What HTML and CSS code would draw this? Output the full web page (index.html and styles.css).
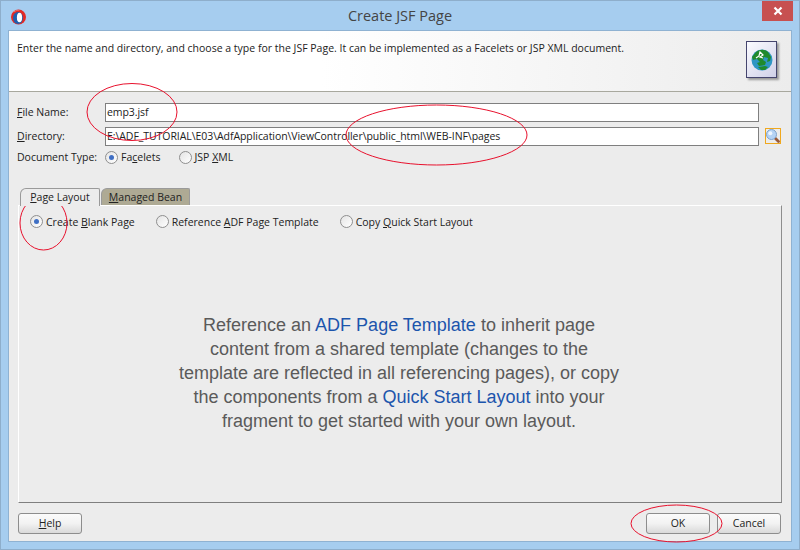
FILE: index.html
```html
<!DOCTYPE html>
<html lang="en">
<head>
<meta charset="utf-8">
<title>Create JSF Page</title>
<link rel="stylesheet" href="styles.css">
</head>
<body>
<div class="window">
  <div class="titlebar">
    <svg class="app-icon" width="16" height="16" viewBox="0 0 16 16">
      <circle cx="8.500" cy="8" r="7.500" fill="#e32a25"/>
      <path d="M2 4C4 1 8 .8 10 1.500 6 1.500 3 3 2 4Z" fill="#f6a09a"/>
      <ellipse cx="8" cy="9" rx="5" ry="6" fill="#1f5fae"/>
      <ellipse cx="9.500" cy="8.500" rx="2.600" ry="4.800" fill="#fff"/>
    </svg>
    <div class="title">Create JSF Page</div>
    <div class="close">
      <svg width="10" height="10" viewBox="0 0 10 10"><path d="M1.500 1.500l7 7M8.500 1.500l-7 7" stroke="#fff" stroke-width="2.200"/></svg>
    </div>
  </div>
  <div class="dialog">
    <div class="header">
      <p class="intro">Enter the name and directory, and choose a type for the JSF Page. It can be implemented as a Facelets or JSP XML document.</p>
      <div class="globe-tile">
        <svg width="22" height="22" viewBox="0 0 22 22">
          <circle cx="11" cy="11" r="10.500" fill="#2f96c4"/>
          <path d="M5 3c4-3 9-3 12 0l3 5-1 4-3 1 1-4-4-1-1 3 3 2-1 3-6 1-2-3 3-1-3-3-4 1-1-3Z" fill="#1f8a2d"/>
          <path d="M7 18l7-1 3 1-3 3h-4Z" fill="#1f8a2d"/>
          <path d="M5 9l3-2 1-4 3 3-3 2 3 1" stroke="#fff" stroke-width="1.200" fill="none"/>
        </svg>
      </div>
    </div>
    <div class="form">
      <div class="row">
        <label class="field-label"><u>F</u>ile Name:</label>
        <div class="input">emp3.jsf</div>
        <div class="input-gap"></div>
      </div>
      <div class="row">
        <label class="field-label"><u>D</u>irectory:</label>
        <div class="input">E:\ADF_TUTORIAL\E03\AdfApplication\ViewController\public_html\WEB-INF\pages</div>
        <div class="input-gap">
          <div class="search-btn">
            <svg width="14" height="14" viewBox="0 0 14 14">
              <path d="M8.500 8.500l4 4" stroke="#9a5a3a" stroke-width="2.800" stroke-linecap="round"/>
              <circle cx="5.500" cy="5.500" r="5" fill="#b5d3f5" stroke="#7fa3cc"/>
              <circle cx="4.300" cy="4.300" r="2" fill="#eef6ff"/>
            </svg>
          </div>
        </div>
      </div>
      <div class="row type-row">
        <span class="field-label">Document Type:</span>
        <span class="radio selected"></span><span class="radio-text">Fa<u>c</u>elets</span>
        <span class="radio second"></span><span class="radio-text">JSP <u>X</u>ML</span>
      </div>
    </div>
    <div class="tabs">
      <div class="tab active"><u>P</u>age Layout</div>
      <div class="tab inactive"><u>M</u>anaged Bean</div>
    </div>
    <div class="panel">
      <div class="layout-options">
        <span class="radio selected"></span><span class="radio-text opt">Create <u>B</u>lank Page</span>
        <span class="radio"></span><span class="radio-text opt">Reference <u>A</u>DF Page Template</span>
        <span class="radio"></span><span class="radio-text">Copy <u>Q</u>uick Start Layout</span>
      </div>
      <div class="description">
        <p>Reference an <span class="link">ADF Page Template</span> to inherit page<br>content from a shared template (changes to the<br>template are reflected in all referencing pages), or copy<br>the components from a <span class="link">Quick Start Layout</span> into your<br>fragment to get started with your own layout.</p>
      </div>
    </div>
    <div class="footer">
      <div class="btn"><u>H</u>elp</div>
      <div class="footer-right">
        <div class="btn">OK</div>
        <div class="btn">Cancel</div>
      </div>
    </div>
  </div>
  <svg class="annotations" width="800" height="550" viewBox="0 0 800 550">
    <ellipse cx="132" cy="112" rx="45" ry="28.500"/>
    <ellipse cx="436.500" cy="135" rx="90.500" ry="30"/>
    <ellipse cx="43.500" cy="223" rx="23.500" ry="27"/>
    <ellipse cx="676.500" cy="523.500" rx="45.500" ry="18.500"/>
  </svg>
</div>
</body>
</html>
```
FILE: styles.css
```css
* { box-sizing: border-box; }
html, body { margin: 0; padding: 0; }
body { font-family: "Open Sans", "Liberation Sans", sans-serif; font-size: 10.5px; color: #222; }
p { margin: 0; }
.window {
  position: relative;
  width: 800px; height: 550px;
  background: #a6cdef;
  border: 1px solid #8eaecb;
  display: flex; flex-direction: column;
  overflow: hidden;
}
.titlebar { height: 29px; flex: none; display: flex; align-items: center; position: relative; }
.app-icon { margin-left: 9px; margin-top: 3px; }
.title { position: absolute; left: 0; right: 0; top: 5px; text-align: center; font-size: 14.500px; line-height: 20px; color: #444; }
.close {
  position: absolute; right: 6px; top: 0;
  width: 31px; height: 20px;
  background: #c75050;
  display: flex; align-items: center; justify-content: center;
}
.dialog {
  flex: 1;
  margin: 0 7px 7px;
  background: #ececec;
  border: 1px solid #8fb2d2;
  display: flex; flex-direction: column;
}
.header {
  height: 61px; flex: none;
  background: linear-gradient(90deg, #fff, #fff 40%, #ececec);
  border-bottom: 1px solid #a8a89e;
  display: flex; justify-content: space-between;
  padding: 9px 14px 0 8px;
}
.intro { line-height: 16px; }
.globe-tile {
  width: 31px; height: 37px; margin-top: 1px;
  background: linear-gradient(135deg, #fbfbff, #cfd0e8);
  border: 1px solid #45456e;
  box-shadow: 2px 2px 2px #999;
  display: flex; align-items: center; justify-content: center;
}
.form { padding: 10px 0 0 8px; display: flex; flex-direction: column; gap: 4px; }
.row { display: flex; align-items: center; height: 20px; }
.field-label { width: 88px; flex: none; }
.input {
  width: 654px; height: 19px; flex: none;
  background: #fff;
  border: 1px solid #7f7f7f;
  padding-left: 1px;
  line-height: 17px;
  letter-spacing: -0.06px;
  white-space: nowrap; overflow: hidden;
}
.input-gap { flex: 1; padding-left: 6px; }
.search-btn {
  width: 16px; height: 16px;
  border: 1px solid #f0a81e;
  display: flex; align-items: center; justify-content: center;
}
.type-row { margin-top: -3px; }
.radio {
  width: 13px; height: 13px; flex: none;
  border: 1px solid #8f8f8f; border-radius: 50%;
  background: linear-gradient(135deg, #e4e4e4, #fff);
  margin-right: 3px;
  display: flex; align-items: center; justify-content: center;
}
.radio.selected::after {
  content: ""; width: 5px; height: 5px; border-radius: 50%;
  background: #3f6fc4;
}
.radio.second { margin-left: 18px; }
.radio-text { white-space: nowrap; }
.radio-text.opt { margin-right: 21px; }
.tabs { display: flex; margin: 21px 0 0 11px; height: 18px; flex: none; align-items: flex-end; }
.tab { height: 18px; line-height: 17px; text-align: center; }
.tab.active {
  width: 80px;
  background: #ececec;
  border: 1px solid #9a9a9a; border-bottom: 0;
  border-radius: 6px 2px 0 0;
  position: relative; z-index: 1;
}
.tab.inactive {
  width: 89px; margin-left: 1px;
  background: #aeaa94;
  border: 1px solid #9a9a9a; border-bottom: 0;
  border-radius: 6px 2px 0 0;
}
.panel {
  height: 298px; flex: none;
  margin: -1px 9px 0;
  border-top: 1px solid #fff; border-left: 1px solid #fff;
  border-right: 1px solid #8d8d8d; border-bottom: 1px solid #7f7f7f;
  display: flex; flex-direction: column;
}
.layout-options { display: flex; align-items: center; padding: 7px 0 0 11px; height: 24px; }
.description {
  flex: 1; display: flex; align-items: center; justify-content: center;
  padding: 13px 2px 0 0;
}
.description p {
  font-family: "Liberation Sans", Arial, sans-serif;
  font-size: 18px; line-height: 24px;
  color: #5a5a5a; text-align: center;
}
.link { color: #1c55ac; }
.footer { display: flex; justify-content: space-between; padding: 10px 10px 0 9px; }
.footer-right { display: flex; gap: 7px; }
.btn {
  width: 64px; height: 21px;
  border: 1px solid #8d8d8d; border-radius: 3px;
  background: linear-gradient(180deg, #fbfbfb, #f2f2f2 50%, #d9d9d9);
  text-align: center; line-height: 19px;
}
.annotations { position: absolute; left: -1px; top: -1px; pointer-events: none; }
.annotations ellipse { fill: none; stroke: #e8112d; stroke-width: 1; }
```
